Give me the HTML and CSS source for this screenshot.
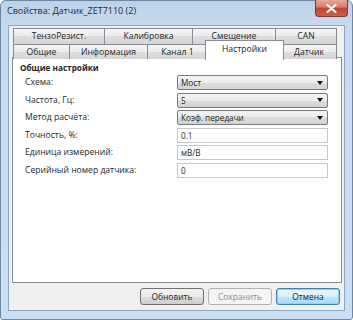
FILE: index.html
```html
<!DOCTYPE html>
<html>

<head>
    <meta name="viewport" content="width=device-width, initial-scale=1.0">
    <title>Свойства: Датчик_ZET7110 (2)</title>
    <link rel="stylesheet" href="styles.css">
</head>

<body>

    <div class="window">
        <div class="titlebar">
            <span class="title">Свойства: Датчик_ZET7110 (2)</span>
            <div class="close">
                <svg width="11" height="9" viewBox="0 0 11 9">
                    <path d="M1.5 1 L9.5 8 M9.5 1 L1.5 8" stroke="#fff" stroke-width="2.2" stroke-linecap="round" />
                </svg>
            </div>
        </div>

        <div class="client">
            <div class="tabs">
                <div class="tab-row">
                    <div class="tab t-tenzo">ТензоРезист.</div>
                    <div class="tab t-calib">Калибровка</div>
                    <div class="tab t-shift">Смещение</div>
                    <div class="tab t-can">CAN</div>
                </div>
                <div class="tab-row">
                    <div class="tab t-common">Общие</div>
                    <div class="tab t-info">Информация</div>
                    <div class="tab t-chan">Канал 1</div>
                    <div class="tab t-settings active">Настройки</div>
                    <div class="tab t-sensor">Датчик</div>
                </div>
            </div>

            <div class="panel">
                <div class="group-title">Общие настройки</div>
                <div class="form">
                    <span class="label">Схема:</span>
                    <div class="combo">Мост</div>

                    <span class="label">Частота, Гц:</span>
                    <div class="combo">5</div>

                    <span class="label">Метод расчёта:</span>
                    <div class="combo">Коэф. передачи</div>

                    <span class="label">Точность, %:</span>
                    <div class="edit">0.1</div>

                    <span class="label">Единица измерений:</span>
                    <div class="edit">мВ/В</div>

                    <span class="label">Серийный номер датчика:</span>
                    <div class="edit">0</div>
                </div>
            </div>

            <div class="buttons">
                <button class="btn">Обновить</button>
                <button class="btn" disabled>Сохранить</button>
                <button class="btn default">Отмена</button>
            </div>
        </div>
    </div>

</body>

</html>
```

FILE: styles.css
```css
body {
    margin: 0;
    font-family: "Open Sans", "DejaVu Sans", sans-serif;
    font-size: 8.6px;
    color: #262626;
}

.window {
    width: 353px;
    height: 320px;
    box-sizing: border-box;
    border: 1px solid #6f86a3;
    border-radius: 6px 6px 3px 3px;
    padding: 0 7px 7px 7px;
    background: linear-gradient(#bcd1ea, #c8daef 26px, #ccdef1);
}

.titlebar {
    height: 25px;
    margin: -1px -7px 0 -7px;
    padding: 0 4px 0 6px;
    display: flex;
    justify-content: space-between;
    align-items: flex-start;
}

.title {
    margin-top: 4px;
    font-size: 9px;
    color: #2a2a2a;
}

.close {
    width: 33px;
    height: 17px;
    box-sizing: border-box;
    border: 1px solid #7d3a30;
    border-top: none;
    border-radius: 0 0 4px 4px;
    background: linear-gradient(#e8a89a, #d77a67 45%, #c4452f 50%, #cd5d45);
    display: flex;
    align-items: center;
    justify-content: center;
}

.client {
    width: 337px;
    height: 286px;
    box-sizing: border-box;
    border: 1px solid #8fa4c0;
    background: #f0f0f0;
}

.tabs {
    padding: 2px 0 0 4px;
    height: 31px;
    box-sizing: border-box;
}

.tab-row {
    display: flex;
}

.tab {
    box-sizing: border-box;
    border: 1px solid #898c95;
    border-bottom: none;
    margin-left: -1px;
    background: linear-gradient(#f5f5f5, #ebebeb 50%, #dddddd 50%, #d6d6d6);
    text-align: center;
    height: 16px;
    line-height: 14px;
    white-space: nowrap;
}

.tab-row:last-child .tab {
    height: 15px;
}

.tab-row .tab:first-child {
    margin-left: 0;
}

.t-tenzo { width: 92px; }
.t-calib { width: 89px; }
.t-shift { width: 84px; }
.t-can { width: 62px; }

.t-common { width: 57px; }
.t-info { width: 79px; }
.t-chan { width: 61px; }
.t-settings { width: 75px; }
.t-sensor { width: 56px; }

.tab-row:last-child .tab.active {
    position: relative;
    z-index: 1;
    background: #fff;
    height: 20px;
    margin: -4px -2px 0 -3px;
    width: 79px;
    line-height: 16px;
}

.panel {
    width: 330px;
    height: 226px;
    box-sizing: border-box;
    margin-left: 3px;
    border: 1px solid #898c95;
    background: #fff;
    padding: 4px 0 0 7px;
}

.group-title {
    font-weight: bold;
    font-size: 8.2px;
    height: 12px;
    line-height: 12px;
}

.form {
    display: grid;
    grid-template-columns: 152px 151px;
    grid-auto-rows: 15px;
    row-gap: 2.6px;
    margin-top: 1px;
    padding-left: 5px;
    align-items: center;
}

.label {
    line-height: 15px;
}

.combo,
.edit {
    height: 15px;
    box-sizing: border-box;
    padding-left: 3px;
    line-height: 13px;
    font-size: 8.2px;
}

.combo {
    border: 1px solid #7a7a7a;
    border-radius: 2px;
    background: linear-gradient(#f3f3f3, #ebebeb 50%, #dddddd 50%, #d3d3d3);
    display: flex;
    justify-content: space-between;
    align-items: center;
    padding-right: 4px;
}

.combo::after {
    content: "";
    border-left: 3px solid transparent;
    border-right: 3px solid transparent;
    border-top: 4px solid #111;
}

.edit {
    border: 1px solid #c4c8cf;
    background: #fff;
}

.buttons {
    display: flex;
    justify-content: flex-end;
    gap: 4px;
    padding: 5px 4px 0 0;
}

.btn {
    width: 64px;
    height: 17px;
    box-sizing: border-box;
    padding: 0;
    font-family: inherit;
    font-size: 8.4px;
    color: #1e1e1e;
    border: 1px solid #707070;
    border-radius: 3px;
    background: linear-gradient(#f2f2f2, #ebebeb 50%, #dddddd 50%, #cfcfcf);
}

.btn:disabled {
    color: #8a8a8a;
    border-color: #adb2b5;
    background: #f4f4f4;
}

.btn.default {
    border-color: #3c7fb1;
    box-shadow: inset 0 0 0 1px #8fd0f5;
    background: linear-gradient(#eaf6fd, #d9f0fc 50%, #bee6fd 50%, #a7d9f5);
}
```
